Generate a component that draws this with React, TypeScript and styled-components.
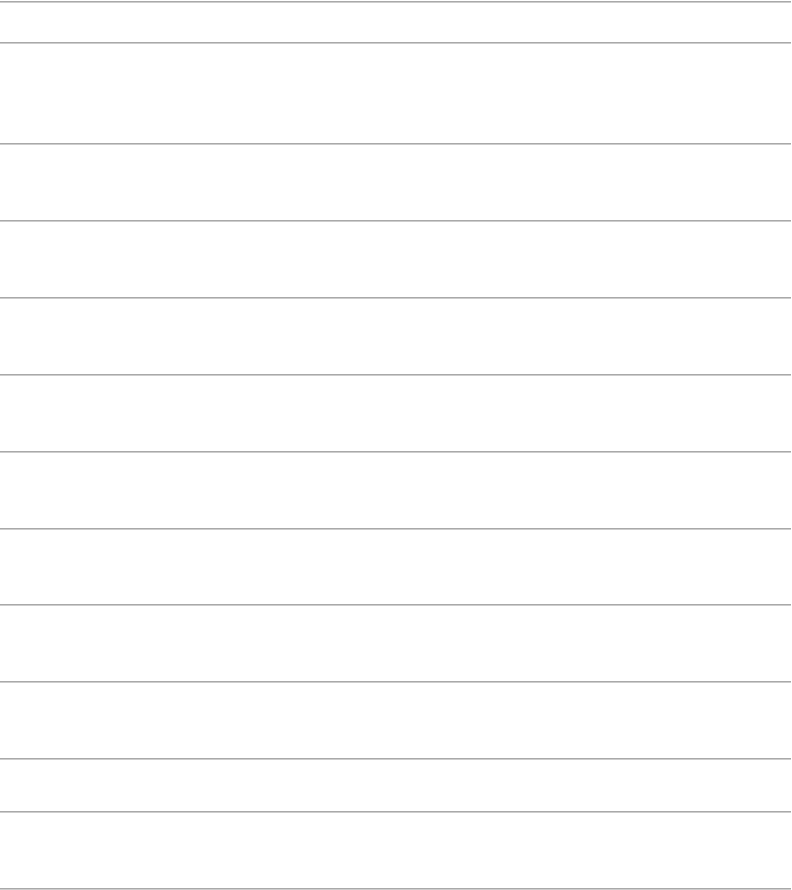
import React from "react";
import styled, { createGlobalStyle } from "styled-components";

const GlobalStyle = createGlobalStyle`
  html, body {
    margin: 0;
    padding: 0;
    background: #ffffff;
    font-family: "Liberation Sans", Arial, sans-serif;
  }
`;

const Page = styled.div`
  display: flex;
  flex-direction: column;
  width: 791px;
  padding-top: 1px;
`;

const Rule = styled.div`
  height: 0;
  border-top: 1px solid #a9a9a9;
  border-bottom: 1px solid #cdcdcd;
`;

const Section = styled.div<{ $h: number }>`
  height: ${(p) => p.$h}px;
`;

const heights = [39, 99, 75, 75, 75, 75, 75, 74, 75, 75, 51, 75];

export default function App() {
  return (
    <>
      <GlobalStyle />
      <Page>
        <Rule />
        {heights.map((h, i) => (
          <React.Fragment key={i}>
            <Section $h={h} />
            <Rule />
          </React.Fragment>
        ))}
      </Page>
    </>
  );
}
